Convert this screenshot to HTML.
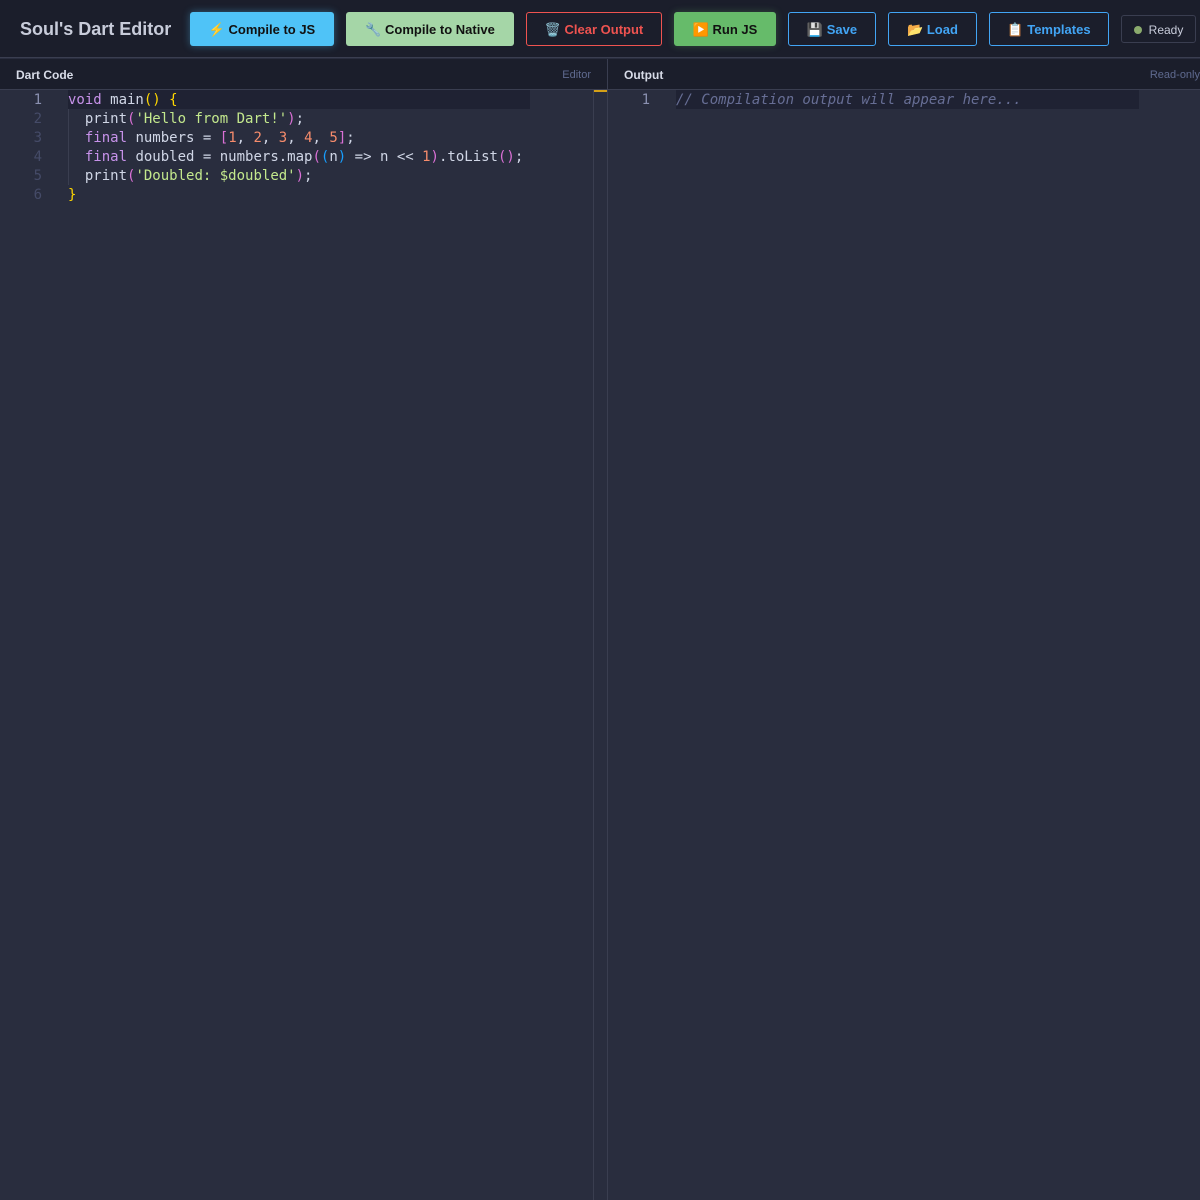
<!DOCTYPE html>
<html><head><meta charset="utf-8"><style>
*{margin:0;padding:0;box-sizing:border-box}
body{width:1200px;height:1200px;background:#292d3e;font-family:"Liberation Sans",sans-serif;overflow:hidden;position:relative}
.top{position:absolute;left:0;top:0;width:1200px;height:58px;background:#1b1e2b;border-bottom:1px solid #3a3e50}
.title{position:absolute;left:20px;top:19px;font-size:18px;font-weight:bold;color:#c8ccda}
.b{position:absolute;top:12px;height:34px;padding-top:2px;border-radius:3px;font-size:13px;font-weight:bold;display:flex;align-items:center;justify-content:center;gap:9px}
.o{border:1px solid #42a5f5;color:#42a5f5;background:transparent}
.ph{position:absolute;top:59px;height:31px;background:#1b1e2b;border-bottom:1px solid #3a3e50;font-size:12px}
.ph b{position:absolute;left:16px;top:9px;color:#d8dce8}
.ph span{position:absolute;top:10px;font-size:11px;color:#5f6a8f}
.code{position:absolute;font-family:"DejaVu Sans Mono",monospace;font-size:14px;line-height:19px;white-space:pre}
.ln{position:absolute;font-family:"DejaVu Sans Mono",monospace;font-size:14px;line-height:19px;color:#454b68;text-align:right;width:42px;white-space:pre}
.k{color:#c792ea}.s{color:#c3e88d}.n{color:#f78c6c}.y{color:#ffd700}.p{color:#da70d6}.bl{color:#179fff}.w{color:#d0d6e6}.op{color:#d0d6e6}
</style></head><body>
<div class="top">
<div class="title">Soul's Dart Editor</div>
<div class="b" style="left:190px;width:144px;background:#4fc3f7;color:#111;box-shadow:0 0 8px rgba(79,195,247,.4)">⚡ Compile to JS</div>
<div class="b" style="left:346px;width:168px;background:#a5d6a7;color:#111">🔧 Compile to Native</div>
<div class="b" style="left:526px;width:136px;border:1px solid #ef5350;color:#ef5350">🗑️ Clear Output</div>
<div class="b" style="left:674px;width:102px;background:#66bb6a;color:#111;box-shadow:0 0 8px rgba(102,187,106,.3)">▶️ Run JS</div>
<div class="b o" style="left:788px;width:88px">💾 Save</div>
<div class="b o" style="left:888px;width:89px">📂 Load</div>
<div class="b o" style="left:989px;width:120px">📋 Templates</div>
<div class="b" style="left:1121px;width:75px;top:15px;height:28px;border:1px solid #3a3e50;color:#c8ccda;font-weight:normal;font-size:12px;gap:7px"><span style="width:8px;height:8px;border-radius:50%;background:#8bab6d;display:inline-block"></span>Ready</div>
</div>
<div class="ph" style="left:0;width:607px"><b>Dart Code</b><span style="right:16px">Editor</span></div>
<div class="ph" style="left:608px;width:592px"><b>Output</b><span style="right:0">Read-only</span></div>
<div style="position:absolute;left:607px;top:59px;width:1px;height:1141px;background:#3a3e50"></div>
<div style="position:absolute;left:593px;top:90px;width:1px;height:1110px;background:#3a3e50"></div>
<div style="position:absolute;left:594px;top:90px;width:13px;height:2px;background:#d4a017"></div>
<div style="position:absolute;left:68px;top:90px;width:462px;height:19px;background:#1f2233"></div>
<div style="position:absolute;left:676px;top:90px;width:463px;height:19px;background:#1f2233"></div>
<div style="position:absolute;left:68px;top:109px;width:1px;height:76px;background:#3a3e50"></div>
<div class="ln" style="left:0;top:90px;padding-top:1px"><span style="color:#8a90b0">1</span>
2
3
4
5
6</div>
<div class="code w" style="left:68px;top:91px"><span class="k">void</span> main<span class="y">()</span> <span class="y">{</span>
  print<span class="p">(</span><span class="s">'Hello from Dart!'</span><span class="p">)</span><span class="op">;</span>
  <span class="k">final</span> numbers <span class="op">=</span> <span class="p">[</span><span class="n">1</span>, <span class="n">2</span>, <span class="n">3</span>, <span class="n">4</span>, <span class="n">5</span><span class="p">]</span><span class="op">;</span>
  <span class="k">final</span> doubled <span class="op">=</span> numbers.map<span class="p">(</span><span class="bl">(</span>n<span class="bl">)</span> <span class="op">=&gt;</span> n <span class="op">&lt;&lt;</span> <span class="n">1</span><span class="p">)</span>.toList<span class="p">()</span><span class="op">;</span>
  print<span class="p">(</span><span class="s">'Doubled: $doubled'</span><span class="p">)</span><span class="op">;</span>
<span class="y">}</span></div>
<div class="ln" style="left:608px;top:91px;color:#8a90b0">1</div>
<div class="code" style="left:676px;top:91px;color:#676e95;font-style:italic">// Compilation output will appear here...</div>
</body></html>
